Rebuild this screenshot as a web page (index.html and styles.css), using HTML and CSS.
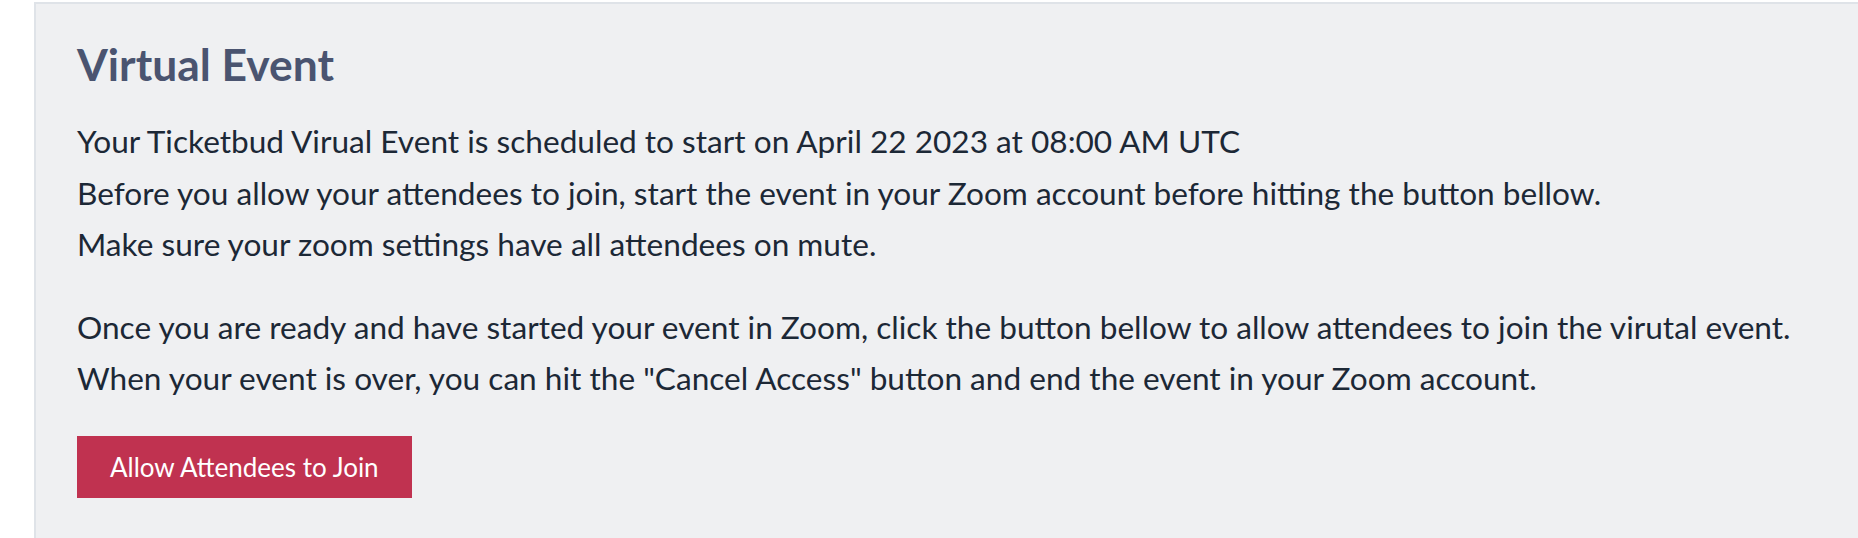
FILE: index.html
```html
<!DOCTYPE html>
<html lang="en">
<head>
<meta charset="utf-8">
<title>Virtual Event</title>
<link rel="stylesheet" href="styles.css">
</head>
<body>
<section class="panel">
  <h2 class="panel-title">Virtual Event</h2>
  <p class="panel-text">Your Ticketbud Virual Event is scheduled to start on April 22 2023 at 08:00 AM UTC<br>Before you allow your attendees to join, start the event in your Zoom account before hitting the button bellow.<br>Make sure your zoom settings have all attendees on mute.</p>
  <p class="panel-text">Once you are ready and have started your event in Zoom, click the button bellow to allow attendees to join the virutal event.<br>When your event is over, you can hit the "Cancel Access" button and end the event in your Zoom account.</p>
  <button class="btn-join" type="button">Allow Attendees to Join</button>
</section>
</body>
</html>
```
FILE: styles.css
```css
html, body {
  margin: 0;
  padding: 0;
  background: #ffffff;
  height: 100%;
  overflow: hidden;
}
body {
  font-family: Lato, "Open Sans", "Liberation Sans", sans-serif;
}
.panel {
  margin: 2px 0 0 34px;
  border-top: 2px solid #dfe3e8;
  border-left: 2px solid #dfe3e8;
  background: #eff0f2;
  padding: 33px 41px 60px;
  min-height: 538px;
  box-sizing: border-box;
}
.panel-title {
  margin: 0 0 26px;
  font-size: 44.4px;
  line-height: 53px;
  font-weight: 700;
  color: #4a5470;
}
.panel-text {
  margin: 0 0 31px;
  font-size: 31.6px;
  line-height: 51.5px;
  color: #1c2836;
}
.btn-join {
  display: inline-block;
  border: none;
  border-radius: 0;
  background: #c03250;
  color: #ffffff;
  font-family: Lato, "Open Sans", "Liberation Sans", sans-serif;
  font-size: 26px;
  height: 62px;
  padding: 0 33px;
  cursor: pointer;
}
```
